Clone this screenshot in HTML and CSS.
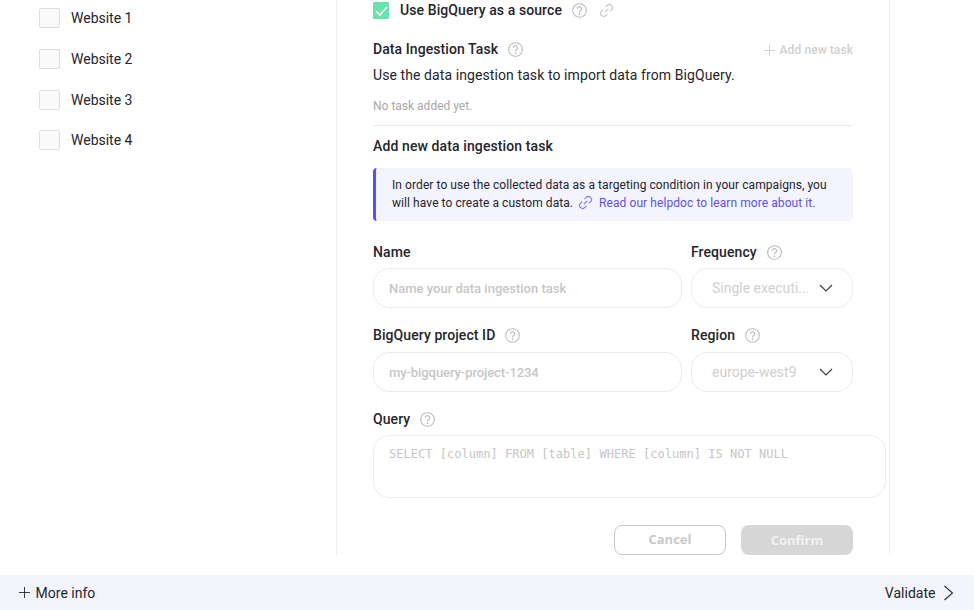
FILE: index.html
```html
<!DOCTYPE html>
<html lang="en">
<head>
<meta charset="utf-8">
<title>BigQuery source</title>
<link rel="stylesheet" href="styles.css">
</head>
<body>
<svg class="sprites" width="0" height="0" aria-hidden="true">
  <symbol id="help" viewBox="0 0 16 16">
    <circle cx="8" cy="8" r="7.3" fill="none" stroke="currentColor" stroke-width="1.1"/>
    <path d="M5.7 6.2a2.3 2.3 0 1 1 3.6 1.9c-.9.5-1.3 1-1.3 2" fill="none" stroke="currentColor" stroke-width="1.2"/>
    <circle cx="8" cy="12" r=".9" fill="currentColor"/>
  </symbol>
  <symbol id="link" viewBox="0 0 16 16">
    <path d="M6.2 9.8l3.6-3.6M7 4.400l1.900-1.900a3 3 0 0 1 4.200 0l.4.4a3 3 0 0 1 0 4.200L11.600 9M9 11.600l-1.900 1.900a3 3 0 0 1-4.200 0l-.4-.4a3 3 0 0 1 0-4.200L4.400 7" fill="none" stroke="currentColor" stroke-width="1.1"/>
  </symbol>
  <symbol id="chev" viewBox="0 0 14 8">
    <path d="M1 1l6 6 6-6" fill="none" stroke="currentColor" stroke-width="1.1"/>
  </symbol>
  <symbol id="plus" viewBox="0 0 12 12">
    <path d="M6 0v12M0 6h12" fill="none" stroke="currentColor" stroke-width="1"/>
  </symbol>
</svg>

<main class="main">
  <aside class="sites">
    <label class="site"><span class="box"></span><span>Website 1</span></label>
    <label class="site"><span class="box"></span><span>Website 2</span></label>
    <label class="site"><span class="box"></span><span>Website 3</span></label>
    <label class="site"><span class="box"></span><span>Website 4</span></label>
  </aside>

  <section class="panel">
    <div class="source">
      <span class="check"><svg width="13" height="10" viewBox="0 0 13 10"><path d="M1 5l4 4 7-8" fill="none" stroke="#fff" stroke-width="1.6"/></svg></span>
      <span class="source-label">Use BigQuery as a source</span>
      <svg class="ic-help source-help"><use href="#help"/></svg>
      <svg class="ic-link"><use href="#link"/></svg>
    </div>

    <div class="task-head">
      <div class="label"><span>Data Ingestion Task</span><svg class="ic-help"><use href="#help"/></svg></div>
      <div class="add"><svg class="ic-plus"><use href="#plus"/></svg><span>Add new task</span></div>
    </div>
    <p class="intro">Use the data ingestion task to import data from BigQuery.</p>
    <p class="empty">No task added yet.</p>
    <hr class="rule">
    <h2 class="sub">Add new data ingestion task</h2>

    <div class="notice">
      In order to use the collected data as a targeting condition in your campaigns, you<br>
      will have to create a custom data.<svg class="ic-notice"><use href="#link"/></svg><a class="notice-link">Read our helpdoc to learn more about it.</a>
    </div>

    <div class="row row-name">
      <div class="col-main">
        <div class="label"><span>Name</span></div>
        <div class="input">Name your data ingestion task</div>
      </div>
      <div class="col-side">
        <div class="label"><span>Frequency</span><svg class="ic-help"><use href="#help"/></svg></div>
        <div class="select"><span>Single executi...</span><svg class="ic-chev"><use href="#chev"/></svg></div>
      </div>
    </div>

    <div class="row row-project">
      <div class="col-main">
        <div class="label"><span>BigQuery project ID</span><svg class="ic-help"><use href="#help"/></svg></div>
        <div class="input input-tight">my-bigquery-project-1234</div>
      </div>
      <div class="col-side">
        <div class="label"><span>Region</span><svg class="ic-help"><use href="#help"/></svg></div>
        <div class="select"><span>europe-west9</span><svg class="ic-chev"><use href="#chev"/></svg></div>
      </div>
    </div>

    <div class="query">
      <div class="label"><span>Query</span><svg class="ic-help"><use href="#help"/></svg></div>
      <div class="textarea">SELECT [column] FROM [table] WHERE [column] IS NOT NULL</div>
    </div>

    <div class="actions">
      <button class="btn btn-cancel" type="button">Cancel</button>
      <button class="btn btn-confirm" type="button">Confirm</button>
    </div>
  </section>
</main>

<footer class="bar">
  <div class="more"><svg class="ic-more"><use href="#plus"/></svg><span>More info</span></div>
  <div class="validate"><span>Validate</span><svg width="11" height="16" viewBox="0 0 11 16"><path d="M1.500 1l8 7-8 7" fill="none" stroke="#2b2b33" stroke-width="1.100"/></svg></div>
</footer>
</body>
</html>
```

FILE: styles.css
```css
* { box-sizing: border-box; }
html, body { margin: 0; padding: 0; }
body {
  width: 974px;
  height: 610px;
  overflow: hidden;
  background: #fff;
  font-family: Roboto, "Liberation Sans", sans-serif;
  font-size: 14px;
  color: #25252d;
}
.sprites { position: absolute; }

.main { display: flex; height: 555px; overflow: hidden; }

.sites {
  width: 336px;
  flex: none;
  padding: 8.15px 0 0 39px;
  display: flex;
  flex-direction: column;
  gap: 20px;
}
.site { display: flex; align-items: center; gap: 11px; height: 20.6px; line-height: 20px; }
.box {
  width: 21px;
  height: 20px;
  background: #fafafa;
  border: 1px solid #dedede;
  border-radius: 2px;
}

.panel {
  width: 554px;
  flex: none;
  height: 555px;
  border-left: 1px solid #ececec;
  border-right: 1px solid #ececec;
  padding: 2px 0 0 36px;
}

.source { display: flex; align-items: center; height: 17px; width: 480px; }
.check {
  width: 16px;
  height: 17px;
  background: #68e3ad;
  border-radius: 1px;
  display: flex;
  align-items: center;
  justify-content: center;
}
.source-label { margin-left: 11px; font-weight: 500; line-height: 17px; letter-spacing: .09px; }
.source-help { margin-left: 10px; }
.ic-help { width: 15px; height: 15px; color: #b9b9b9; margin-left: 10px; flex: none; }
.ic-link { width: 15px; height: 15px; color: #c4c4c4; margin-left: 12px; flex: none; }

.label { display: flex; align-items: center; font-weight: 500; line-height: 18px; height: 18px; letter-spacing: .08px; }

.task-head { display: flex; justify-content: space-between; align-items: center; width: 480px; margin-top: 21px; }
.add { display: flex; align-items: center; font-size: 12px; font-weight: 500; color: #cfcfcf; letter-spacing: .09px; position: relative; top: 1px; }
.ic-plus { width: 11px; height: 11px; margin-right: 5px; }

.intro { margin: 8px 0 0; line-height: 18px; width: 480px; letter-spacing: .09px; }
.empty { margin: 14px 0 0; font-size: 12px; line-height: 16px; color: #a8a8a8; }
.rule { border: 0; border-top: 1px solid #e9e9e9; width: 480px; margin: 11px 0 0; }
.sub { margin: 11px 0 0; font-size: 14px; font-weight: 500; line-height: 18px; letter-spacing: .11px; }

.notice {
  width: 480px;
  height: 53px;
  margin-top: 13px;
  padding: 8px 12px 0 16px;
  background: #f4f4fe;
  border-left: 3px solid #5d50ef;
  border-radius: 4px;
  font-size: 12px;
  line-height: 18px;
  letter-spacing: .075px;
}
.ic-notice { width: 15px; height: 15px; color: #7a6ff5; margin: 0 6px 0 5px; vertical-align: -3px; }
.notice-link { color: #5d50ef; }

.row { display: flex; gap: 9px; width: 480px; }
.row-name { margin-top: 22px; }
.row-project { margin-top: 18px; }
.row-project .input, .row-project .select { margin-top: 8px; }
.col-main { width: 309px; flex: none; }
.col-side { width: 162px; flex: none; }

.input, .select {
  height: 40px;
  margin-top: 7px;
  border: 1px solid #ececec;
  border-radius: 16px;
  display: flex;
  align-items: center;
  color: #c6c6c6;
  font-weight: 500;
  font-size: 13px;
}
.input { padding-left: 15px; }
.input-tight { letter-spacing: -.08px; }
.select { padding: 0 19px 0 20px; justify-content: space-between; font-size: 14px; font-weight: 400; color: #d0d0d0; }
.ic-chev { width: 14px; height: 8px; color: #3a3a3a; flex: none; }

.query { margin-top: 18px; }
.textarea {
  width: 513px;
  height: 63px;
  margin-top: 7px;
  padding: 10px 15px;
  border: 1px solid #ececec;
  border-radius: 16px;
  font-family: "DejaVu Sans Mono", "Liberation Mono", monospace;
  font-size: 12px;
  letter-spacing: .03px;
  line-height: 16px;
  color: #c6c6c6;
}

.actions { display: flex; justify-content: flex-end; gap: 15px; width: 480px; margin-top: 27px; }
.btn {
  width: 112px;
  height: 30px;
  border-radius: 8px;
  font-family: "Open Sans", sans-serif;
  font-size: 13px;
  font-weight: 700;
  padding: 0;
}
.btn-cancel { background: #fff; border: 1px solid #c9c9c9; color: #c9c9c9; padding-bottom: 2px; }
.btn-confirm { background: #d6d6d6; border: 0; color: #f2f2f2; }

.bar {
  margin-top: 20px;
  height: 35px;
  background: #f4f4fd;
  display: flex;
  justify-content: space-between;
  align-items: center;
  padding: 0 20px 0 19px;
}
.more, .validate { display: flex; align-items: center; }
.ic-more { width: 11px; height: 11px; margin-right: 5.6px; color: #2b2b33; }
.validate { gap: 7.6px; }
```
